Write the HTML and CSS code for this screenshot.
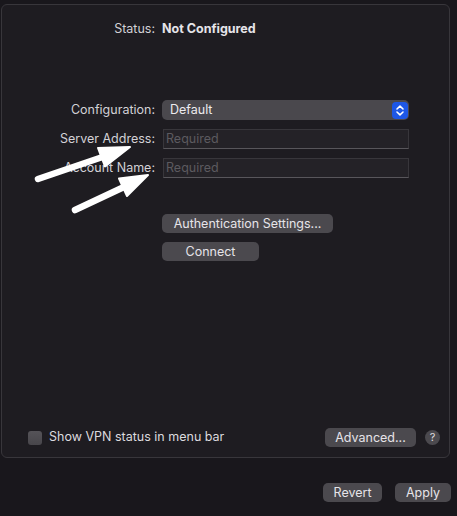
FILE: index.html
```html
<!DOCTYPE html>
<html>
<head>
<meta charset="utf-8">
<link rel="stylesheet" href="styles.css">
</head>
<body>
<div class="panel">
  <div class="form">
    <div class="label status-row">Status:</div>
    <div class="value status-row">Not Configured</div>

    <div class="label row-config">Configuration:</div>
    <div class="popup row-config">
      <span class="popup-text">Default</span>
      <span class="stepper">
        <svg width="16" height="17" viewBox="0 0 16 17"><path d="M5 7 L8 4.2 L11 7 M5 10 L8 12.8 L11 10" fill="none" stroke="#fff" stroke-width="1.6" stroke-linecap="round" stroke-linejoin="round"/></svg>
      </span>
    </div>

    <div class="label row-field">Server Address:</div>
    <div class="field row-field">Required</div>

    <div class="label row-field2">Account Name:</div>
    <div class="field row-field2">Required</div>

    <div class="buttons-col">
      <div class="btn btn-auth">Authentication Settings...</div>
      <div class="btn btn-connect">Connect</div>
    </div>
  </div>

  <div class="bottom-row">
    <div class="check"></div>
    <div class="check-label">Show VPN status in menu bar</div>
    <div class="btn btn-adv">Advanced...</div>
    <div class="help">?</div>
  </div>

  <svg class="arrows" width="457" height="516" viewBox="0 0 457 516">
    <line x1="38" y1="179" x2="104" y2="156.5" stroke="#fff" stroke-width="6.5" stroke-linecap="round"/>
    <path d="M130 147 L105 166.5 L98 148 Z" fill="#fff" stroke="#fff" stroke-width="2" stroke-linejoin="round"/>
    <line x1="75" y1="210" x2="125" y2="186.5" stroke="#fff" stroke-width="6.5" stroke-linecap="round"/>
    <path d="M148 175 L127 196 L119 178.5 Z" fill="#fff" stroke="#fff" stroke-width="2" stroke-linejoin="round"/>
  </svg>
</div>

<div class="footer">
  <div class="btn btn-revert">Revert</div>
  <div class="btn btn-apply">Apply</div>
</div>
</body>
</html>
```

FILE: styles.css
```css
html, body {
  margin: 0;
  padding: 0;
  background: #19171c;
  font-family: Inter, "Noto Sans", "Liberation Sans", sans-serif;
  font-size: 12.5px;
  color: #dedce1;
  width: 457px;
  height: 516px;
  overflow: hidden;
}

.panel {
  position: relative;
  box-sizing: border-box;
  margin: 4px 0 0 1px;
  width: 449px;
  height: 454px;
  border: 1px solid #38363b;
  border-radius: 6px;
  background: #1e1c21;
  display: flex;
  flex-direction: column;
}

.form {
  display: grid;
  grid-template-columns: 153px 247px;
  column-gap: 7px;
  align-items: center;
  padding-top: 14px;
}

.label {
  text-align: right;
  color: #d3d1d6;
  white-space: nowrap;
}

.status-row {
  height: 20px;
  line-height: 20px;
}

.value {
  font-weight: 700;
  color: #e6e4e9;
}

.row-config {
  margin-top: 61px;
  height: 20px;
  line-height: 20px;
}

.popup {
  box-sizing: border-box;
  background: #4a484d;
  border-radius: 5px;
  display: flex;
  align-items: center;
  justify-content: space-between;
  padding: 0 1px 0 8px;
  color: #ecebee;
}

.stepper {
  width: 16px;
  height: 17px;
  background: #1d57e6;
  border-radius: 4px;
  display: flex;
}

.row-field {
  margin-top: 9px;
  height: 20px;
  line-height: 20px;
}

.row-field2 {
  margin-top: 9px;
  height: 20px;
  line-height: 20px;
}

.field {
  box-sizing: border-box;
  margin-left: 1px;
  width: 246px;
  background: #242227;
  border: 1px solid #38363b;
  border-bottom-color: #58565b;
  color: #5c5a5f;
  padding-left: 2px;
  line-height: 18px;
}

.buttons-col {
  grid-column: 2;
  display: flex;
  flex-direction: column;
  align-items: flex-start;
  gap: 9px;
  margin-top: 36px;
}

.btn {
  box-sizing: border-box;
  height: 19px;
  line-height: 19px;
  background: #4b494e;
  border-radius: 5px;
  color: #e6e4e9;
  text-align: center;
  white-space: nowrap;
}

.btn-auth { width: 171px; }
.btn-connect { width: 97px; }

.bottom-row {
  margin-top: auto;
  display: flex;
  align-items: center;
  height: 19px;
  margin-bottom: 10px;
  padding-left: 26px;
}

.check {
  box-sizing: border-box;
  width: 14px;
  height: 14px;
  border-radius: 3px;
  background: linear-gradient(#555358, #48464b);
}

.check-label {
  margin-left: 7px;
  color: #dcdadf;
  line-height: 16px;
  margin-top: -2px;
}

.btn-adv {
  margin-left: auto;
  width: 91px;
}

.help {
  width: 15px;
  height: 15px;
  border-radius: 50%;
  background: #4b494e;
  color: #dcdadf;
  text-align: center;
  line-height: 15px;
  font-size: 11px;
  margin: 0 9px 0 9px;
}

.arrows {
  position: absolute;
  left: -2px;
  top: -5px;
  pointer-events: none;
}

.footer {
  display: flex;
  justify-content: flex-end;
  gap: 13px;
  margin-top: 25px;
  padding-right: 6px;
}

.btn-revert { width: 59px; }
.btn-apply { width: 56px; }
```
